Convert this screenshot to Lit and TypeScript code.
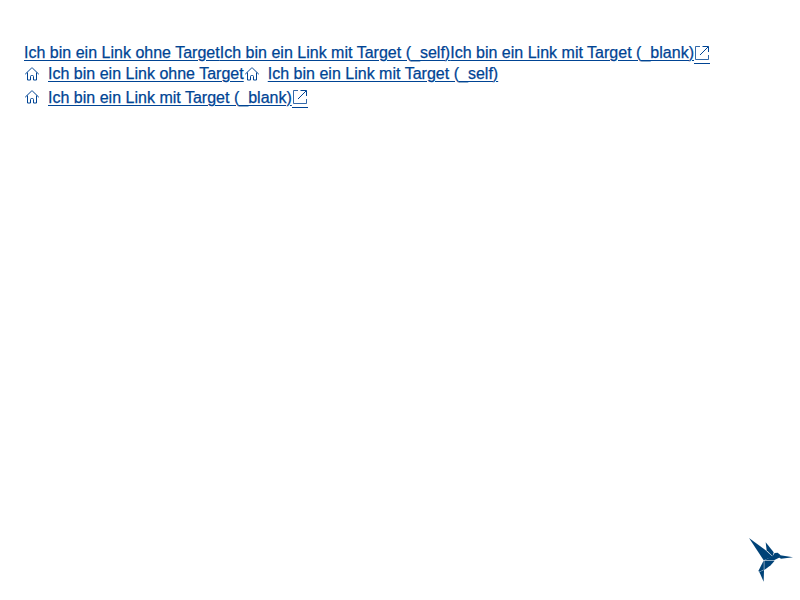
import { LitElement, html, css, svg, nothing } from "lit";
import { customElement, property } from "lit/decorators.js";

const house = svg`<path d="M1.2 8.2 7.4 2.2Q8 1.7 8.6 2.2L14.8 8.2M3.5 6.5V14H6.5V10.5Q6.5 9.5 7.5 9.5H8.5Q9.5 9.5 9.5 10.5V14H12.5V6.5" />`;
const external = svg`<path d="M6 1.5H1.5V14.5H14.5V10" stroke-opacity="0.8" /><path d="M8.5 1.5H14.5V7M14.3 1.7 6 10" />`;

@customElement("text-link")
class TextLink extends LitElement {
  static styles = css`
    :host { display: inline-flex; height: 21px; }
    :host([tall]) { height: 26px; }
    a {
      display: inline-flex; align-items: center; color: #004494;
      text-decoration: none; white-space: nowrap; height: 100%;
    }
    .label {
      text-decoration: underline; text-decoration-thickness: 1px; text-underline-offset: 2px;
      letter-spacing: 0.012px; -webkit-text-stroke: 0.25px currentColor;
    }
    :host([tall]) .label { padding-top: 2px; }
    svg { display: block; width: 16px; height: 16px; fill: none; stroke: currentColor; stroke-width: 1; }
    .home { margin-right: 8px; }
    .out { height: 19px; border-bottom: 1px solid currentColor; box-sizing: border-box; padding-bottom: 2px; margin-top: 3px; }
  `;
  @property() label = "";
  @property({ type: Boolean }) icon = false;
  @property({ type: Boolean }) blank = false;

  render() {
    return html`<a href="#">${this.icon
      ? html`<svg class="home" viewBox="0 0 16 16">${house}</svg>`
      : nothing}<span class="label">${this.label}</span>${this.blank
      ? html`<svg class="out" viewBox="0 0 16 16">${external}</svg>`
      : nothing}</a>`;
  }
}

@customElement("app-root")
class AppRoot extends LitElement {
  static styles = css`
    :host {
      display: block; box-sizing: border-box; height: 600px; padding: 42px 24px 0;
      background: #fff; font: 16px/20px "Liberation Sans", Arial, sans-serif; position: relative;
    }
    .row { display: flex; }
    .logo { position: absolute; right: 0; bottom: 10px; width: 60px; height: 60px; fill: #004277; }
  `;
  render() {
    const plain = "Ich bin ein Link ohne Target";
    const self = "Ich bin ein Link mit Target (_self)";
    const blank = "Ich bin ein Link mit Target (_blank)";
    return html`
      <div class="row"><text-link label=${plain}></text-link><text-link label=${self}></text-link><text-link label=${blank} blank></text-link></div>
      <div class="row"><text-link label=${plain} icon></text-link><text-link label=${self} icon></text-link></div>
      <div class="row"><text-link label=${blank} icon blank tall></text-link></div>
      <svg class="logo" viewBox="0 0 180 180">
        <path d="M27 24 76 60 98 80 71 90.5Z" />
        <path d="M77 37 101 67 98 78.5 80 61Z" />
        <path d="M98 78 104 69 113 68 122 76 117 83 102 91 73 91Z" />
        <path d="M121 76 159 82 123 86 116 82Z" />
        <path d="M73 92 104 92 92 106 73 120Z" />
        <path d="M71.5 91 71.5 119 58 125 55 123Z" />
        <path d="M72 120 71 155 58 126Z" />
      </svg>`;
  }
}
